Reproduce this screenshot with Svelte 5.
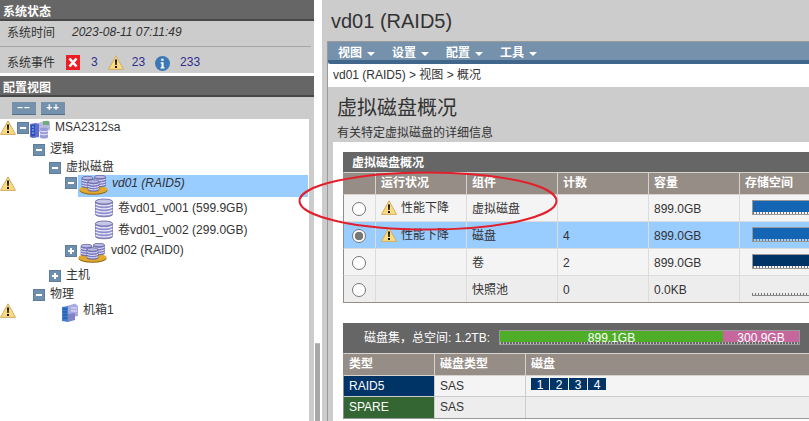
<script>
  const tree = [
    { key: 'msa', label: 'MSA2312sa', indent: 17, gap: 0, box: 'minus', icon: 'server', warn: true },
    { key: 'logic', label: '逻辑', indent: 33, gap: 6, box: 'minus' },
    { key: 'vdisks', label: '虚拟磁盘', indent: 49, gap: 2, box: 'minus' },
    { key: 'vd01', label: 'vd01 (RAID5)', indent: 65, gap: 0, box: 'minus', icon: 'vdisk', warn: true, selected: true },
    { key: 'v1', label: '卷vd01_v001 (599.9GB)', indent: 95, gap: 3, icon: 'volume' },
    { key: 'v2', label: '卷vd01_v002 (299.0GB)', indent: 95, gap: 6, icon: 'volume' },
    { key: 'vd02', label: 'vd02 (RAID0)', indent: 65, gap: 4, box: 'plus', icon: 'vdisk' },
    { key: 'host', label: '主机', indent: 49, gap: 9, box: 'plus' },
    { key: 'phys', label: '物理', indent: 33, gap: 3, box: 'minus' },
    { key: 'encl', label: '机箱1', indent: 62, gap: 0, icon: 'chassis', warn: true }
  ];
  const menus = ['视图', '设置', '配置', '工具'];
  const overview = [
    { warn: true, status: '性能下降', part: '虚拟磁盘', count: '', cap: '899.0GB', bar: 'blue' },
    { warn: true, status: '性能下降', part: '磁盘', count: '4', cap: '899.0GB', bar: 'blue', selected: true },
    { warn: false, status: '', part: '卷', count: '2', cap: '899.0GB', bar: 'navy' },
    { warn: false, status: '', part: '快照池', count: '0', cap: '0.0KB', bar: 'none', alt: true }
  ];
</script>

{#snippet warning()}
  <svg class="warn" viewBox="0 0 16 15" width="16" height="15" aria-hidden="true">
    <path d="M8 .8 15.5 14.4H.5Z" fill="#fbdb80" stroke="#cfae66" stroke-linejoin="round" />
    <path d="M7 4.6h2l-.3 5.4H7.3ZM7 11h2v2H7Z" fill="#111" />
  </svg>
{/snippet}

{#snippet stack(x, y)}
  <g transform="translate({x} {y})">
    <path d="M0 2C0 .5 11 .5 11 2V10.500C11 12.200 0 12.200 0 10.500Z" fill="#7a7ac4" stroke="#55558c" stroke-width=".6" />
    <path d="M0 4.200C2.500 5.800 8.500 5.800 11 4.200M0 6.800C2.500 8.400 8.500 8.400 11 6.800M0 9.200C2.500 10.800 8.500 10.800 11 9.200" fill="none" stroke="#e6e6f8" stroke-width="1" />
    <ellipse cx="5.500" cy="2" rx="5.500" ry="1.700" fill="#b9b9e6" stroke="#55558c" stroke-width=".6" />
  </g>
{/snippet}

{#snippet nodeIcon(kind)}
  {#if kind === 'server'}
    <svg class="ico-server" viewBox="0 0 20 19" width="20" height="19" aria-hidden="true">
      <path d="M8 3 17 .5 20 2V10L8 12Z" fill="#b9b9e0" />
      <rect x="13" y="1" width="6" height="4" fill="#6fae7c" />
      <path d="M0 4 6 3 9 4V17L3 18 0 17Z" fill="#5a6fd0" />
      <path d="M1 5 5 4.5V16L1 16.6Z" fill="#3a4cb0" />
      <path d="M2 7h2M2 10h2M2 13h2" stroke="#7fe0ff" stroke-width="1" />
      <path d="M10 8.6C10 7.4 18 7.4 18 8.6V17C18 19 10 19 10 17Z" fill="#9a9ad4" />
      <path d="M10 11C12 12 16 12 18 11M10 14C12 15 16 15 18 14" stroke="#e8e8f8" fill="none" />
    </svg>
  {:else if kind === 'vdisk'}
    <svg class="ico-vdisk" viewBox="0 0 29 20" width="29" height="20" aria-hidden="true">
      <ellipse cx="14.500" cy="15.500" rx="14" ry="4.200" fill="#8a6410" />
      <ellipse cx="14.500" cy="14.500" rx="14" ry="4.200" fill="#e3a92f" />
      {@render stack(3, 1)}
      {@render stack(15.500, 0)}
      {@render stack(9, 4.500)}
    </svg>
  {:else if kind === 'volume'}
    <svg class="ico-volume" viewBox="0 0 18 20" width="18" height="20" aria-hidden="true">
      <path d="M.5 3.500C.5 1 17.500 1 17.500 3.500V16.500C17.500 19.500 .5 19.500 .5 16.500Z" fill="#8d8dcf" stroke="#6a6a9c" stroke-width=".8" />
      <path d="M.5 6C4 8.500 14 8.500 17.500 6M.5 9C4 11.500 14 11.500 17.500 9M.5 12C4 14.500 14 14.500 17.500 12M.5 15C4 17.500 14 17.500 17.500 15" fill="none" stroke="#f0f0fb" stroke-width="1.300" />
      <ellipse cx="9" cy="3.500" rx="8.500" ry="2.500" fill="#c6c6ea" stroke="#6a6a9c" stroke-width=".8" />
    </svg>
  {:else}
    <svg class="ico-chassis" viewBox="0 0 16 20" width="16" height="20" aria-hidden="true">
      <path d="M5 3 13 .5 16 3V13L5 15Z" fill="#a9a9e2" />
      <path d="M9 5h6M9 8h6" stroke="#e8e8fa" />
      <path d="M0 4 6 3V19L0 18Z" fill="#3f7fd0" />
      <path d="M1.500 6h1M3.500 6h1M1.500 9h1M3.500 9h1M1.500 12h1M3.500 12h1M1.500 15h1M3.500 15h1" stroke="#0f3a70" stroke-width="1.500" />
      <path d="M6 11 13 10V17L6 19Z" fill="#8383c8" />
    </svg>
  {/if}
{/snippet}

<div class="page">
  <aside class="side">
    <h2 class="band">系统状态</h2>
    <section class="status">
      <div class="st-row st-time"><span>系统时间</span><em>2023-08-11 07:11:49</em></div>
      <div class="st-row st-events">
        <span>系统事件</span>
        <svg class="err" viewBox="0 0 14 15" width="14" height="15" aria-hidden="true">
          <rect width="14" height="15" fill="#ee1c25" />
          <path d="M3.500 3.500 10.500 11.500M10.500 3.500 3.500 11.500" stroke="#fff" stroke-width="2.600" />
        </svg>
        <b class="num n1">3</b>
        {@render warning()}
        <b class="num n2">23</b>
        <svg class="info" viewBox="0 0 15 15" width="15" height="15" aria-hidden="true">
          <circle cx="7.500" cy="7.500" r="7.500" fill="#3c78b5" />
          <path d="M6.200 2.800h2.400v2H6.200ZM5.600 6.200h3v5h1v1.300H5.500v-1.300h1V7.500h-.9Z" fill="#fff" />
        </svg>
        <b class="num n3">233</b>
      </div>
    </section>
    <h2 class="band second">配置视图</h2>
    <div class="tools">
      <button class="tbtn" type="button">−−</button>
      <button class="tbtn" type="button">++</button>
    </div>
    <div class="tree">
      {#each tree as n (n.key)}
        <div class="node" class:sel={n.selected} class:disk={n.icon === 'vdisk'} style="margin-top:{n.gap}px;padding-left:{n.indent}px">
          {#if n.warn}<span class="node-warn">{@render warning()}</span>{/if}
          {#if n.box}
            <span class="box"><i></i>{#if n.box === 'plus'}<i class="v"></i>{/if}</span>
          {/if}
          <span class="node-body">
            {#if n.icon}{@render nodeIcon(n.icon)}{/if}
            <span class="node-label">{n.label}</span>
          </span>
        </div>
      {/each}
    </div>
  </aside>

  <div class="gutter"><div class="thumb"></div></div>

  <main class="main">
    <h1 class="title">vd01 (RAID5)</h1>
    <div class="frame">
      <nav class="nav">
        {#each menus as m}
          <span class="menu">{m}<i class="caret"></i></span>
        {/each}
      </nav>
      <div class="crumb">vd01 (RAID5) &gt; 视图 &gt; 概况</div>
      <div class="body">
        <h2 class="heading">虚拟磁盘概况</h2>
        <p class="sub">有关特定虚拟磁盘的详细信息</p>
        <div class="sheet">
          <div class="tbl">
            <div class="tbl-title">虚拟磁盘概况</div>
            <div class="grid head">
              <span></span><span>运行状况</span><span>组件</span><span>计数</span><span>容量</span><span>存储空间</span>
            </div>
            {#each overview as r}
              <div class="grid row" class:selected={r.selected} class:alt={r.alt}>
                <span class="radio-cell"><i class="radio" class:on={r.selected}></i></span>
                <span class="stat">{#if r.warn}{@render warning()}{/if}{r.status}</span>
                <span>{r.part}</span>
                <span>{r.count}</span>
                <span>{r.cap}</span>
                <span class="store"><i class="meter {r.bar}"><i class="ticks"></i></i></span>
              </div>
            {/each}
          </div>

          <div class="tbl second-tbl">
            <div class="set-title">
              <span class="set-label">磁盘集，总空间: 1.2TB:</span>
              <div class="usage">
                <div class="usage-fill">
                  <span class="used">899.1GB</span>
                  <span class="free">300.9GB</span>
                </div>
                <i class="ticks light"></i>
              </div>
            </div>
            <div class="grid2 head">
              <span>类型</span><span>磁盘类型</span><span>磁盘</span>
            </div>
            <div class="grid2 row2">
              <span class="raid5">RAID5</span><span>SAS</span>
              <span class="chips"><b>1</b><b>2</b><b>3</b><b>4</b></span>
            </div>
            <div class="grid2 row2 alt">
              <span class="spare">SPARE</span><span>SAS</span><span></span>
            </div>
          </div>
        </div>
      </div>
    </div>
  </main>

  <svg class="callout" viewBox="0 0 270 66" width="270" height="66" aria-hidden="true">
    <ellipse cx="134" cy="33" rx="128.500" ry="28.500" fill="none" stroke="#e2202c" stroke-width="2" />
  </svg>
</div>

<style>
  :global(body) { margin: 0; }
  * { box-sizing: border-box; }
  .page {
    position: relative;
    display: flex;
    width: 809px;
    height: 421px;
    overflow: hidden;
    background: #fff;
    color: #333;
    font: 12px/14px "Liberation Sans", "Noto Sans CJK SC", sans-serif;
  }
  h1, h2, p { margin: 0; font-weight: normal; }
  svg { display: block; flex: none; }

  .side { width: 314px; flex: none; display: flex; flex-direction: column; background: #ccc; }
  .band {
    height: 21px;
    padding: 5px 3px 0;
    flex: none;
    background: #666;
    border-bottom: 2px solid #484848;
    color: #fff;
    font-size: 12px;
    font-weight: bold;
    line-height: 14px;
  }
  .band.second { margin-top: 3px; }
  .status { height: 52px; flex: none; background: #ccc; border-bottom: 3px solid #fff; margin-bottom: -3px; box-sizing: content-box; }
  .st-row { display: flex; align-items: center; padding-left: 7px; color: #333; }
  .st-time { height: 26px; margin-right: 3px; border-bottom: 1px solid #a4a4a4; }
  .st-time em { margin-left: 17px; margin-top: -4px; }
  .st-time span { margin-top: -1px; }
  .st-events { height: 26px; padding-top: 5px; }
  .err { margin-left: 11px; }
  .num { font-weight: normal; color: #2e2e8c; }
  .n1 { margin: -2px 10px 0 11px; }
  .n2 { margin: -2px 10px 0 8px; }
  .n3 { margin: -2px 0 0 10px; }
  .st-events .info { margin-top: 1px; }

  .tools { height: 22px; flex: none; display: flex; gap: 5px; padding: 5px 0 0 12px; }
  .tbtn {
    width: 24px;
    height: 13px;
    padding: 0;
    border: 0;
    border-bottom: 1px solid #55708c;
    background: #7591ab;
    color: #fff;
    font: bold 10px/12px "Liberation Sans", sans-serif;
    letter-spacing: 1px;
  }

  .tree { flex: 1; width: 309px; background: #fff; padding-top: 0; }
  .node { position: relative; display: flex; align-items: flex-start; height: 16px; }
  .node.sel { height: 22px; }
  .node-warn { position: absolute; left: 0; top: 1px; }
  .box {
    position: relative;
    flex: none;
    width: 12px;
    height: 12px;
    margin-top: 3px;
    margin-right: 5px;
    background: #6f8fae;
    border: 1px solid #5f7c99;
  }
  .box i { position: absolute; left: 2px; top: 4px; width: 6px; height: 2px; background: #fff; }
  .box i.v { left: 4px; top: 2px; width: 2px; height: 6px; }
  .node.disk .box { margin-right: 1px; }
  .node.sel .box { margin-top: 2px; }
  .node-body { display: flex; align-items: flex-start; flex: 1; min-width: 0; height: 100%; padding-top: 1px; white-space: nowrap; }
  .sel .node-body { background: #99ccff; margin-right: 1px; padding-left: 1px; padding-top: 0; }
  .sel .node-label { font-style: italic; margin-top: 1px; }
  .node-label { margin-left: 5px; }
  .node.disk .node-label { margin-left: 4px; }
  .box + .node-body .node-label:first-child { margin-left: 0; }
  .ico-server { margin-top: 0; margin-left: -4px; }
  .ico-vdisk { margin-top: 0; }
  .ico-volume { margin-top: -3px; }
  .ico-chassis { margin-top: 0; }

  .gutter { width: 8px; flex: none; background: #fff; padding-left: 1px; }
  .thumb { width: 5px; height: 90px; margin-top: 343px; background: #a8a8a8; border-top: 1px solid #bbb; }

  .main { flex: 1; min-width: 0; background: #ccc; padding-left: 5px; }
  .title { height: 41px; padding: 9px 0 0 4px; font-size: 20px; line-height: 24px; color: #333; white-space: nowrap; }
  .frame { height: 380px; border-left: 1px solid #9a9a9a; }
  .nav {
    display: flex;
    gap: 17px;
    height: 23px;
    padding: 4px 0 0 10px;
    background: #7591ab;
    border-top: 1px solid #999;
    border-bottom: 4px solid #41668c;
    border-bottom-left-radius: 3px;
    color: #fff;
  }
  .menu { display: inline-flex; align-items: center; height: 14px; font-weight: bold; }
  .caret { margin-left: 5px; border: 4px solid transparent; border-top: 4px solid #fff; border-bottom: 0; margin-top: 1px; }
  .crumb { height: 23px; padding: 4px 0 0 5px; background: #fff; color: #333; white-space: nowrap; }
  .body { padding-left: 5px; height: 334px; }
  .heading { height: 38px; padding: 9px 0 0 4px; font-size: 20px; line-height: 24px; color: #333; }
  .sub { height: 17px; padding: 1px 0 0 4px; }
  .sheet { height: 279px; background: #fff; padding: 10px 0 0 10px; }

  .tbl { width: 560px; }
  .tbl-title {
    height: 20px;
    padding: 4px 0 0 9px;
    background: #666;
    color: #fff;
    font-weight: bold;
  }
  .grid { display: grid; grid-template-columns: 32px 91px 91px 91px 91px 164px; }
  .grid2 { display: grid; grid-template-columns: 91px 91px 378px; }
  .head {
    height: 23px;
    background: #968d86;
    color: #fff;
    font-weight: bold;
    border-top: 1px solid #d6d2ce;
    border-bottom: 1px solid #d6d2ce;
    border-left: 1px solid #968d86;
  }
  .head span { padding: 3px 0 0 5px; border-right: 1px solid #d6d2ce; }
  .row { height: 27px; background: #f4f4f4; border-bottom: 1px solid #dcdcdc; border-left: 1px solid #968d86; }
  .row > span { padding: 7px 0 0 5px; border-right: 1px solid #dcdcdc; }
  .row.selected { background: #99ccff; }
  .row.alt { background: #ededed; border-bottom-color: #968d86; }
  .row .radio-cell { padding: 7px 0 0 8px; }
  .radio {
    display: block;
    position: relative;
    width: 14px;
    height: 14px;
    border: 1px solid #777;
    border-radius: 50%;
    background: #fff;
  }
  .radio.on { background: radial-gradient(circle, #777 0 4px, #fff 4.6px); }
  .row .stat { display: flex; gap: 4px; padding: 6px 0 0 5px; }
  .row .stat .warn { margin-top: -1px; }
  .row .store { padding: 5px 0 0 12px; }
  .meter { display: block; width: 150px; height: 15px; position: relative; }
  .meter.blue { background: linear-gradient(#1565b5 0 11px, transparent 11px); border: 1px solid #999; border-right: 0; }
  .meter.navy { background: linear-gradient(#003366 0 11px, transparent 11px); border: 1px solid #999; border-right: 0; }
  .meter.none { border-bottom: 1px solid #8a8a8a; margin-top: 0; }
  .ticks {
    position: absolute;
    left: 0;
    right: 0;
    bottom: 0;
    height: 2px;
    background: repeating-linear-gradient(90deg, #777 0 1px, transparent 1px 3px);
  }

  .second-tbl { margin-top: 20px; }
  .set-title { display: flex; height: 30px; background: #666; color: #fff; padding-left: 21px; }
  .set-label { padding-top: 8px; width: 135px; flex: none; white-space: nowrap; }
  .usage { position: relative; width: 301px; height: 15px; margin-top: 7px; border: 1px solid #999; }
  .usage-fill { display: flex; height: 11px; }
  .used, .free { display: block; text-align: center; color: #fff; font-weight: normal; line-height: 14px; height: 13px; }
  .used { width: 223px; background: linear-gradient(#4fae27 0 11px, transparent 11px); }
  .free { flex: 1; background: linear-gradient(#c6669c 0 11px, transparent 11px); }
  .ticks.light { background: repeating-linear-gradient(90deg, #bbb 0 1px, transparent 1px 3px); }

  .row2 { height: 21px; background: #f4f4f4; border-bottom: 1px solid #ccc; border-left: 1px solid #968d86; }
  .row2 > span { padding: 3px 0 0 5px; border-right: 1px solid #ccc; }
  .row2.alt { background: #ededed; height: 22px; border-bottom: 1px solid #999; }
  .row2 > .raid5 { background: #003366; color: #fff; font-weight: normal; padding-left: 5px; }
  .row2 > .spare { background: #336633; color: #fff; padding-left: 5px; }
  .row2 > .chips { display: flex; gap: 1px; padding: 2px 0 0 5px; }
  .chips b {
    width: 18px;
    height: 12px;
    padding-top: 3px;
    background: #003366;
    color: #fff;
    font-weight: normal;
    text-align: center;
    line-height: 9px;
  }
  .callout { position: absolute; left: 294px; top: 168px; }
</style>
